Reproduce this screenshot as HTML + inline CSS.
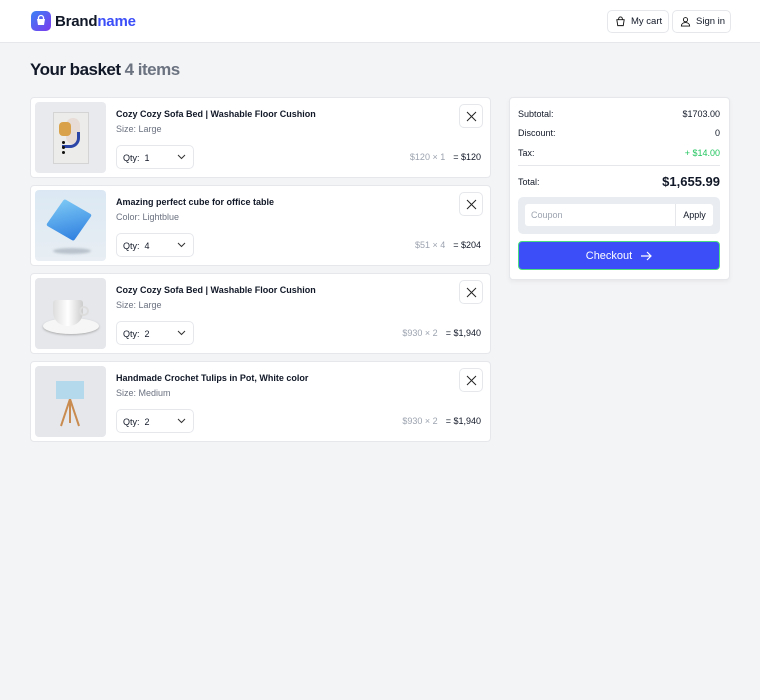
<!DOCTYPE html>
<html><head><meta charset="utf-8"><style>
*{box-sizing:border-box;margin:0;padding:0}
body{width:760px;height:700px;background:#f3f4f6;font-family:"Liberation Sans",sans-serif;color:#111827;position:relative;overflow:hidden}
.hdr{position:absolute;left:0;top:0;width:760px;height:43px;background:#fff;border-bottom:1px solid #e5e7eb}
.logo{position:absolute;left:31px;top:11px;width:20px;height:20px;border-radius:5px;background:linear-gradient(135deg,#3b82f6,#7c3aed)}
.brand{position:absolute;left:55px;top:13px;font-size:15px;font-weight:bold;letter-spacing:-0.2px}
.brand span{color:#3b4ef8}
.hb{position:absolute;top:10px;height:23px;border:1px solid #e5e7eb;border-radius:5px;background:#fff;font-size:9.5px;display:flex;align-items:center;gap:5px;padding-left:7px}
h1{position:absolute;left:30px;top:60px;font-size:17px;font-weight:bold;letter-spacing:-0.5px}
h1 span{color:#6b7280;margin-left:4px}
.card{position:absolute;left:30px;width:461px;height:81px;background:#fff;border:1px solid #e5e7eb;border-radius:4px}
.img{position:absolute;left:4px;top:4px;width:71px;height:71px;border-radius:4px;background:#e5e7eb;overflow:hidden}
.t{position:absolute;left:85px;top:11px;font-size:9px;font-weight:bold}
.s{position:absolute;left:85px;top:26px;font-size:9px;color:#6b7280}
.q{position:absolute;left:85px;top:47px;width:78px;height:24px;border:1px solid #e5e7eb;border-radius:5px;font-size:9px;padding:7px 0 0 6px}
.q svg{position:absolute;right:7px;top:8px}
.x{position:absolute;left:428px;top:6px;width:24px;height:24px;border:1px solid #e5e7eb;border-radius:5px}
.x svg{position:absolute;left:6px;top:6px}
.p{position:absolute;right:9px;top:54px;font-size:9px}
.p span{color:#9ca3af;margin-right:8px}
.sum{position:absolute;left:509px;top:97px;width:221px;height:183px;background:#fff;border:1px solid #e5e7eb;border-radius:4px;box-shadow:0 2px 5px rgba(0,0,0,.05);font-size:9px}
.r{position:absolute;left:8px;right:9px;display:flex;justify-content:space-between}
</style></head><body>
<div class="hdr">
<div class="logo"><svg width="20" height="20" viewBox="0 0 20 20"><path d="M6 8h8l-1 6H7z" fill="#fff"/><path d="M7.5 8V7a2.5 2.5 0 0 1 5 0v1" stroke="#fff" fill="none" stroke-width="1.3"/></svg></div>
<div class="brand">Brand<span>name</span></div>
<div class="hb" style="left:607px;width:62px"><svg width="11" height="11" viewBox="0 0 12 12" fill="none" stroke="#111" stroke-width="1"><path d="M2 4h8l-1 6.5H3z"/><path d="M4 4V3a2 2 0 0 1 4 0v1"/></svg>My cart</div>
<div class="hb" style="left:672px;width:59px"><svg width="11" height="11" viewBox="0 0 12 12" fill="none" stroke="#111" stroke-width="1"><circle cx="6" cy="4" r="2.3"/><path d="M1.5 11c0-2.5 2-3.8 4.5-3.8s4.5 1.3 4.5 3.8z"/></svg>Sign in</div>
</div>
<h1>Your basket<span>4 items</span></h1>

<div class="card" style="top:97px">
<div class="img" style="background:#e9eaee"><div style="position:absolute;left:18px;top:10px;width:36px;height:52px;background:#ececea;border:1px solid #d4d4d4"></div><div style="position:absolute;left:31px;top:16px;width:14px;height:26px;border-radius:8px;background:#e8dcd6"></div><div style="position:absolute;left:24px;top:20px;width:12px;height:14px;border-radius:4px;background:#d9a24a"></div><div style="position:absolute;left:27px;top:30px;width:18px;height:16px;border:3px solid #2b46a6;border-top:none;border-left:none;border-radius:0 0 10px 0"></div><div style="position:absolute;left:27px;top:39px;width:3px;height:3px;border-radius:50%;background:#111;box-shadow:0 5px #111,0 10px #111"></div></div>
<div class="t">Cozy Cozy Sofa Bed | Washable Floor Cushion</div><div class="s">Size: Large</div>
<div class="q">Qty:&nbsp; 1<svg width="9" height="6" viewBox="0 0 9 6"><path d="M1 1l3.5 3.5L8 1" stroke="#333" fill="none"/></svg></div>
<div class="x"><svg width="11" height="11" viewBox="0 0 11 11"><path d="M1 1l9 9M10 1l-9 9" stroke="#222"/></svg></div>
<div class="p"><span>$120 × 1</span>= $120</div></div>

<div class="card" style="top:185px">
<div class="img" style="background:linear-gradient(#dbe8f3,#e8eef3)"><div style="position:absolute;left:18px;top:58px;width:38px;height:6px;border-radius:50%;background:#b9c2cc;filter:blur(1px)"></div><div style="position:absolute;left:18px;top:14px;width:32px;height:32px;background:linear-gradient(135deg,#7cc8f5,#2f7fe0);transform:rotate(30deg) skew(-5deg);border-radius:2px"></div></div>
<div class="t">Amazing perfect cube for office table</div><div class="s">Color: Lightblue</div>
<div class="q">Qty:&nbsp; 4<svg width="9" height="6" viewBox="0 0 9 6"><path d="M1 1l3.5 3.5L8 1" stroke="#333" fill="none"/></svg></div>
<div class="x"><svg width="11" height="11" viewBox="0 0 11 11"><path d="M1 1l9 9M10 1l-9 9" stroke="#222"/></svg></div>
<div class="p"><span>$51 × 4</span>= $204</div></div>

<div class="card" style="top:273px">
<div class="img"><div style="position:absolute;left:8px;top:40px;width:56px;height:16px;border-radius:50%;background:#f6f6f6;box-shadow:0 1px 2px #aaa"></div><div style="position:absolute;left:18px;top:22px;width:30px;height:26px;border-radius:3px 3px 14px 14px;background:linear-gradient(90deg,#ddd,#fff,#ccc)"></div><div style="position:absolute;left:44px;top:28px;width:10px;height:10px;border:2px solid #ddd;border-radius:50%"></div></div>
<div class="t">Cozy Cozy Sofa Bed | Washable Floor Cushion</div><div class="s">Size: Large</div>
<div class="q">Qty:&nbsp; 2<svg width="9" height="6" viewBox="0 0 9 6"><path d="M1 1l3.5 3.5L8 1" stroke="#333" fill="none"/></svg></div>
<div class="x"><svg width="11" height="11" viewBox="0 0 11 11"><path d="M1 1l9 9M10 1l-9 9" stroke="#222"/></svg></div>
<div class="p"><span>$930 × 2</span>= $1,940</div></div>

<div class="card" style="top:361px">
<div class="img"><div style="position:absolute;left:21px;top:15px;width:28px;height:18px;background:#b5d9ec"></div><svg style="position:absolute;left:20px;top:33px" width="30" height="30"><path d="M15 0L6 27M15 0L24 27M15 0V24" stroke="#c98b4f" stroke-width="2"/></svg></div>
<div class="t">Handmade Crochet Tulips in Pot, White color</div><div class="s">Size: Medium</div>
<div class="q">Qty:&nbsp; 2<svg width="9" height="6" viewBox="0 0 9 6"><path d="M1 1l3.5 3.5L8 1" stroke="#333" fill="none"/></svg></div>
<div class="x"><svg width="11" height="11" viewBox="0 0 11 11"><path d="M1 1l9 9M10 1l-9 9" stroke="#222"/></svg></div>
<div class="p"><span>$930 × 2</span>= $1,940</div></div>

<div class="sum">
<div class="r" style="top:11px"><span>Subtotal:</span><span>$1703.00</span></div>
<div class="r" style="top:30px"><span>Discount:</span><span>0</span></div>
<div class="r" style="top:50px"><span>Tax:</span><span style="color:#22c55e">+ $14.00</span></div>
<div style="position:absolute;left:8px;right:9px;top:67px;border-top:1px solid #e5e7eb"></div>
<div class="r" style="top:76px;align-items:center"><span>Total:</span><span style="font-size:13px;font-weight:bold">$1,655.99</span></div>
<div style="position:absolute;left:8px;top:99px;width:202px;height:37px;background:#e9ecf1;border-radius:5px"><div style="position:absolute;left:7px;top:7px;width:188px;height:22px;background:#fff;border-radius:3px"><span style="position:absolute;left:6px;top:6px;color:#9ca3af">Coupon</span><span style="position:absolute;right:0;top:0;height:22px;width:38px;border-left:1px solid #e5e7eb;text-align:center;line-height:22px">Apply</span></div></div>
<div style="position:absolute;left:8px;top:143px;width:202px;height:29px;background:#3b4ef8;border:1px solid #4ade80;border-radius:4px;color:#fff;font-size:11px;display:flex;align-items:center;justify-content:center;gap:8px">Checkout<svg width="12" height="10" viewBox="0 0 12 10"><path d="M1 5h10M7 1l4 4-4 4" stroke="#fff" fill="none" stroke-width="1.2"/></svg></div>
</div>
</body></html>
